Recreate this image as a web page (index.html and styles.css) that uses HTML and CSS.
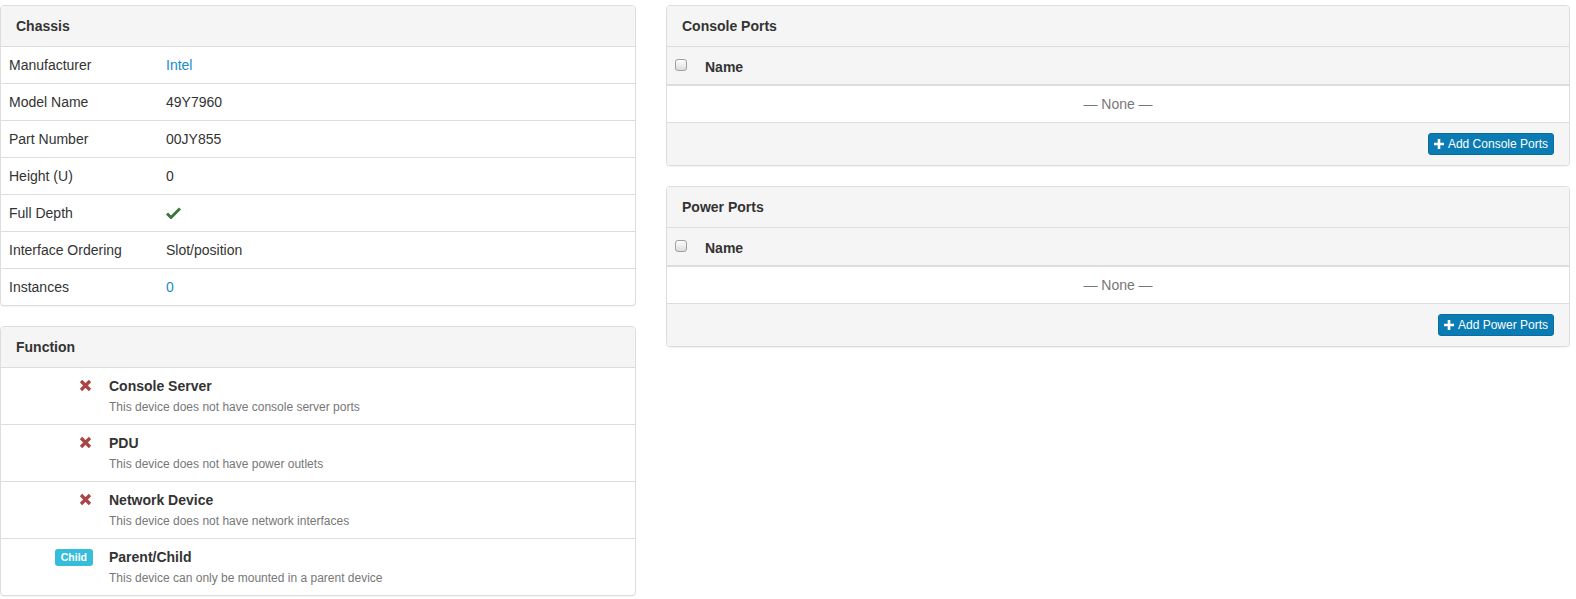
FILE: index.html
```html
<!DOCTYPE html>
<html>
<head>
<meta charset="utf-8">
<link rel="stylesheet" href="styles.css">
</head>
<body>
<div class="page">
  <div class="col-left">
    <div class="panel">
      <div class="panel-heading">Chassis</div>
      <table class="table attrs">
        <tr><td class="lbl">Manufacturer</td><td><a href="#" class="link">Intel</a></td></tr>
        <tr><td class="lbl">Model Name</td><td>49Y7960</td></tr>
        <tr><td class="lbl">Part Number</td><td>00JY855</td></tr>
        <tr><td class="lbl">Height (U)</td><td>0</td></tr>
        <tr><td class="lbl">Full Depth</td><td><svg class="ok" width="15" height="12" viewBox="0 0 15 12"><path d="M1 6.5 L5 10.5 L14 1.5" fill="none" stroke="#3c763d" stroke-width="3"/></svg></td></tr>
        <tr><td class="lbl">Interface Ordering</td><td>Slot/position</td></tr>
        <tr><td class="lbl">Instances</td><td><a href="#" class="link">0</a></td></tr>
      </table>
    </div>
    <div class="panel">
      <div class="panel-heading">Function</div>
      <table class="table func">
        <tr>
          <td class="ico"><svg class="rm" width="13" height="13" viewBox="0 0 13 13"><path d="M2 2 L11 11 M11 2 L2 11" stroke="#a94442" stroke-width="3.2"/></svg></td>
          <td><strong>Console Server</strong><small class="muted">This device does not have console server ports</small></td>
        </tr>
        <tr>
          <td class="ico"><svg class="rm" width="13" height="13" viewBox="0 0 13 13"><path d="M2 2 L11 11 M11 2 L2 11" stroke="#a94442" stroke-width="3.2"/></svg></td>
          <td><strong>PDU</strong><small class="muted">This device does not have power outlets</small></td>
        </tr>
        <tr>
          <td class="ico"><svg class="rm" width="13" height="13" viewBox="0 0 13 13"><path d="M2 2 L11 11 M11 2 L2 11" stroke="#a94442" stroke-width="3.2"/></svg></td>
          <td><strong>Network Device</strong><small class="muted">This device does not have network interfaces</small></td>
        </tr>
        <tr>
          <td class="ico"><span class="label">Child</span></td>
          <td><strong>Parent/Child</strong><small class="muted">This device can only be mounted in a parent device</small></td>
        </tr>
      </table>
    </div>
  </div>
  <div class="col-right">
    <div class="panel">
      <div class="panel-heading">Console Ports</div>
      <table class="table ports">
        <thead><tr><th class="chk"><span class="checkbox"></span></th><th>Name</th></tr></thead>
        <tbody><tr><td colspan="2" class="none">— None —</td></tr></tbody>
      </table>
      <div class="panel-footer">
        <a href="#" class="btn"><svg class="plus" width="10" height="10" viewBox="0 0 10 10"><path d="M5 0 V10 M0 5 H10" stroke="#fff" stroke-width="2.6"/></svg>Add Console Ports</a>
      </div>
    </div>
    <div class="panel">
      <div class="panel-heading">Power Ports</div>
      <table class="table ports">
        <thead><tr><th class="chk"><span class="checkbox"></span></th><th>Name</th></tr></thead>
        <tbody><tr><td colspan="2" class="none">— None —</td></tr></tbody>
      </table>
      <div class="panel-footer">
        <a href="#" class="btn"><svg class="plus" width="10" height="10" viewBox="0 0 10 10"><path d="M5 0 V10 M0 5 H10" stroke="#fff" stroke-width="2.6"/></svg>Add Power Ports</a>
      </div>
    </div>
  </div>
</div>
</body>
</html>
```

FILE: styles.css
```css
* { box-sizing: border-box; }
html, body { margin: 0; background: #fff; }
body {
  font-family: "Liberation Sans", Arial, Helvetica, sans-serif;
  font-size: 14px;
  line-height: 20px;
  color: #333;
}
.page {
  display: flex;
  gap: 30px;
  padding: 5px 6px 0 0;
  align-items: flex-start;
}
.col-left { width: 636px; flex: none; }
.col-right { flex: 1; min-width: 0; }

.panel {
  background: #fff;
  border: 1px solid #ddd;
  border-radius: 4px;
  box-shadow: 0 1px 1px rgba(0,0,0,.05);
  margin-bottom: 20px;
  overflow: hidden;
}
.panel-heading {
  padding: 10px 15px;
  background: #f5f5f5;
  border-bottom: 1px solid #ddd;
  font-weight: bold;
  color: #333;
}
.panel-footer {
  padding: 10px 15px;
  background: #f5f5f5;
  border-top: 1px solid #ddd;
  text-align: right;
  line-height: 0;
}

.table {
  width: 100%;
  border-collapse: collapse;
  border-spacing: 0;
}
.table td, .table th {
  padding: 8px;
  vertical-align: top;
  text-align: left;
  border-top: 1px solid #ddd;
}
.table tr:first-child > td,
.table thead tr:first-child > th { border-top: 0; }

.attrs td.lbl { width: 157px; }
.link { color: #1a8bc9; text-decoration: none; }
.ok { display: inline-block; vertical-align: -1px; }

.func td.ico { width: 100px; text-align: right; }
.func strong { display: block; font-weight: bold; line-height: 20px; }
.rm { display: inline-block; vertical-align: -1px; margin-right: 1px; }
.muted { display: block; color: #777; font-size: 12px; line-height: 17px; margin-top: 3px; }
.label {
  display: inline-block;
  background: #35bdda;
  color: #fff;
  font-size: 10.5px;
  font-weight: bold;
  line-height: 1;
  padding: 3px 6px 3px;
  border-radius: 3px;
  vertical-align: 1px;
}

.ports thead th {
  background: #f5f5f5;
  border-bottom: 2px solid #ddd;
  padding: 10px 8px 7px;
  font-weight: bold;
}
.ports th.chk { width: 30px; }
.checkbox {
  display: inline-block;
  width: 12px;
  height: 12px;
  border: 1px solid #a0a0a0;
  border-radius: 3px;
  background: linear-gradient(#fdfdfd, #dcdcdc);
  vertical-align: 1px;
}
.ports td.none { text-align: center; color: #777; }

.btn {
  display: inline-block;
  background: #0a7bb3;
  border: 1px solid #086d9f;
  border-radius: 3px;
  color: #fff;
  font-size: 12px;
  line-height: 18px;
  padding: 1px 5px;
  text-decoration: none;
  white-space: nowrap;
}
.plus { display: inline-block; margin-right: 4px; vertical-align: -1px; }
```
